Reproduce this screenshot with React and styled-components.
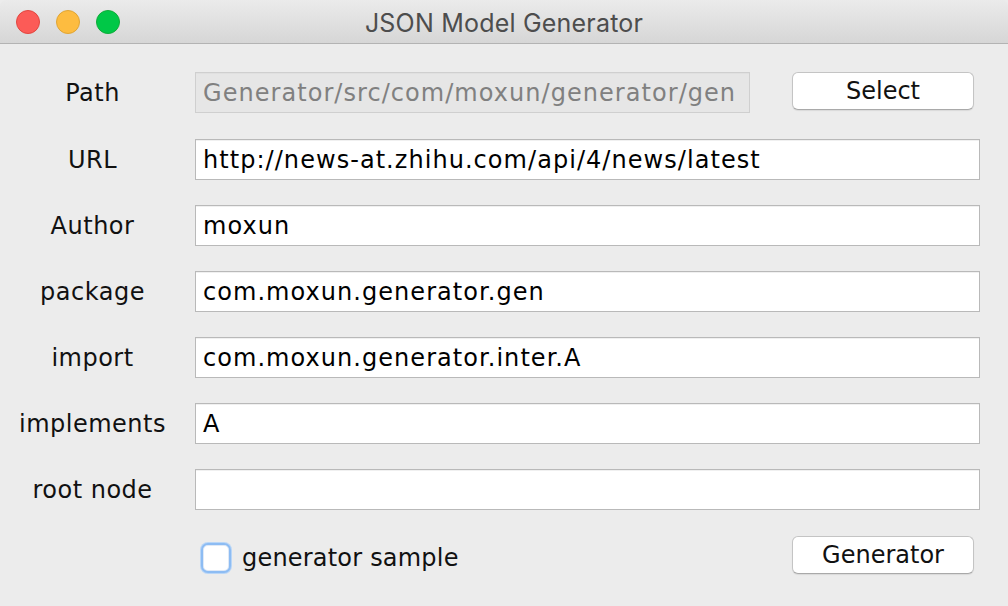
import React from "react";
import styled, { createGlobalStyle } from "styled-components";

const GlobalStyle = createGlobalStyle`
  html, body {
    margin: 0;
    padding: 0;
    background: #ececec;
  }
  body {
    font-family: "DejaVu Sans", "Liberation Sans", sans-serif;
  }
`;

const Window = styled.div`
  width: 1008px;
  height: 606px;
  background: #ececec;
  display: flex;
  flex-direction: column;
  overflow: hidden;
  border-radius: 6px 6px 0 0;
`;

const TitleBar = styled.div`
  height: 43px;
  flex-shrink: 0;
  position: relative;
  display: flex;
  align-items: center;
  justify-content: center;
  background: linear-gradient(#ebebeb, #d6d6d6);
  border-bottom: 1px solid #b3b3b3;
`;

const Lights = styled.div`
  position: absolute;
  left: 16px;
  top: 10px;
  display: flex;
  gap: 16px;
`;

const Light = styled.span`
  width: 22px;
  height: 22px;
  border-radius: 50%;
  background: ${(p) => p.$fill};
  border: 1px solid ${(p) => p.$edge};
`;

const Title = styled.div`
  font-family: Inter, "Liberation Sans", sans-serif;
  font-size: 25px;
  color: #4d4d4d;
  letter-spacing: 0.2px;
  padding-top: 2px;
`;

const Form = styled.div`
  display: grid;
  grid-template-columns: 185px 1fr;
  column-gap: 10px;
  row-gap: 25px;
  padding: 28px 28px 0 0;
`;

const Label = styled.div`
  font-size: 24px;
  letter-spacing: 0.5px;
  color: #111;
  display: flex;
  align-items: center;
  justify-content: center;
  height: 41px;
`;

const PathRow = styled.div`
  display: flex;
  align-items: flex-start;
  gap: 42px;
  margin-bottom: 1px;
  padding-right: 6px;
`;

const Field = styled.div`
  flex: 1;
  height: 41px;
  box-sizing: border-box;
  border: 1px solid ${(p) => (p.$disabled ? "#cfcfcf" : "#b9b9b9")};
  background: ${(p) => (p.$disabled ? "#e6e6e6" : "#ffffff")};
  box-shadow: inset 0 1px 0 ${(p) => (p.$disabled ? "#e0e0e0" : "#f0f0f0")};
  color: ${(p) => (p.$disabled ? "#808080" : "#000")};
  font-size: 24px;
  letter-spacing: 1.05px;
  padding: 0 7px;
  display: flex;
  align-items: center;
  white-space: nowrap;
  overflow: hidden;
`;

const Button = styled.div`
  width: 182px;
  height: 38px;
  box-sizing: border-box;
  flex-shrink: 0;
  background: #fff;
  border: 1px solid #c4c4c4;
  border-bottom-color: #a9a9a9;
  border-radius: 6px;
  box-shadow: 0 1px 1px rgba(0, 0, 0, 0.08);
  font-size: 24px;
  color: #111;
  display: flex;
  align-items: center;
  justify-content: center;
`;

const Footer = styled.div`
  grid-column: 2;
  display: flex;
  align-items: center;
  justify-content: space-between;
  padding: 1px 6px 0 6px;
`;

const CheckWrap = styled.label`
  display: flex;
  align-items: center;
  gap: 11px;
  font-size: 24px;
  letter-spacing: 0.2px;
  color: #111;
  margin-top: 6px;
`;

const Box = styled.span`
  width: 30px;
  height: 30px;
  box-sizing: border-box;
  border-radius: 7px;
  background: #fff;
  border: 2px solid #8dbcf3;
  box-shadow: 0 0 0 1px #b9d6f7, inset 0 0 0 1px #dfe9f6;
`;

const rows = [
  ["URL", "http://news-at.zhihu.com/api/4/news/latest"],
  ["Author", "moxun"],
  ["package", "com.moxun.generator.gen"],
  ["import", "com.moxun.generator.inter.A"],
  ["implements", "A"],
  ["root node", ""],
];

export default function App() {
  return (
    <>
      <GlobalStyle />
      <Window>
        <TitleBar>
          <Lights>
            <Light $fill="#fc5b57" $edge="#e2463f" />
            <Light $fill="#fdbc40" $edge="#e0a534" />
            <Light $fill="#00c847" $edge="#10ac39" />
          </Lights>
          <Title>JSON Model Generator</Title>
        </TitleBar>
        <Form>
          <Label>Path</Label>
          <PathRow>
            <Field $disabled>Generator/src/com/moxun/generator/gen</Field>
            <Button>Select</Button>
          </PathRow>
          {rows.map(([label, value]) => (
            <React.Fragment key={label}>
              <Label>{label}</Label>
              <Field>{value}</Field>
            </React.Fragment>
          ))}
          <Footer>
            <CheckWrap>
              <Box />
              generator sample
            </CheckWrap>
            <Button>Generator</Button>
          </Footer>
        </Form>
      </Window>
    </>
  );
}
